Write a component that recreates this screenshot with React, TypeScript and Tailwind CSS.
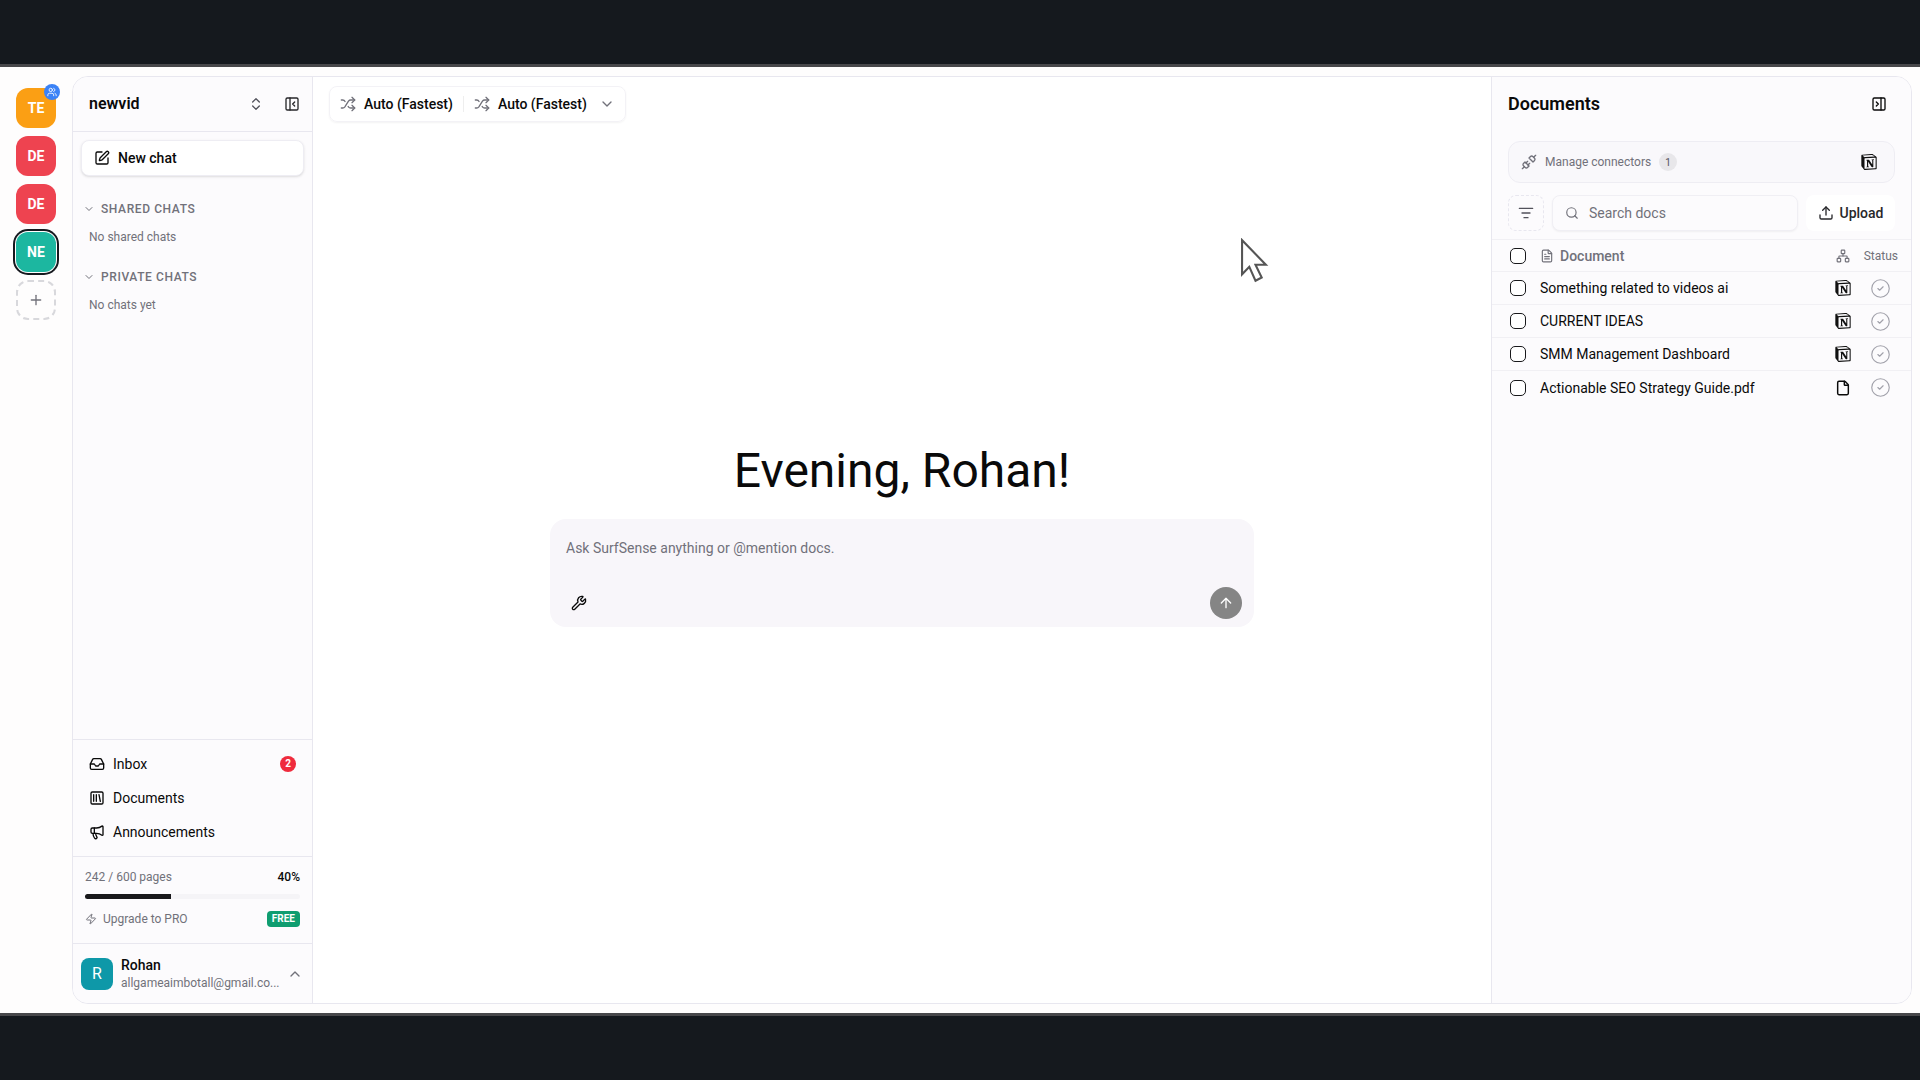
import React from "react";
import {
  ArrowUp,
  ChevronDown,
  ChevronUp,
  ChevronsUpDown,
  CircleCheck,
  File,
  FileText,
  Inbox,
  ListFilter,
  Megaphone,
  Network,
  PanelLeftClose,
  PanelRightClose,
  Plus,
  Search,
  Shuffle,
  SquareLibrary,
  SquarePen,
  Unplug,
  Upload,
  Users,
  Wrench,
  Zap,
} from "lucide-react";
import { SiNotion } from "react-icons/si";

function Workspace({ label, color, active }: { label: string; color: string; active?: boolean }) {
  return (
    <div className={`relative flex h-10 w-10 items-center justify-center rounded-xl text-sm font-bold text-white ${color} ${active ? "ring-2 ring-[#15181e] ring-offset-1" : ""}`}>
      {label}
      {label === "TE" && (
        <span className="absolute -right-1 -top-1 flex h-4 w-4 items-center justify-center rounded-full bg-[#3b82f6]">
          <Users className="h-2.5 w-2.5 text-white" />
        </span>
      )}
    </div>
  );
}

function ChatSection({ title, empty }: { title: string; empty: string }) {
  return (
    <div className="flex flex-col">
      <div className="flex h-5 items-center gap-[6px] pl-[10px]">
        <ChevronDown className="h-3 w-3 text-[#71717a]" />
        <span className="text-xs font-medium tracking-[0.6px] text-[#71717a]">{title}</span>
      </div>
      <p className="mt-[10px] pl-[16px] text-xs leading-4 text-[#71717a]">{empty}</p>
    </div>
  );
}

const docs = [
  { name: "Something related to videos ai", notion: true },
  { name: "CURRENT IDEAS", notion: true },
  { name: "SMM Management Dashboard", notion: true },
  { name: "Actionable SEO Strategy Guide.pdf", notion: false },
];

export default function App() {
  return (
    <div className="flex h-screen w-full flex-col overflow-hidden bg-[#fefdfd] font-['Roboto',sans-serif] text-[#0a0a0a]">
      <div className="h-[64px] shrink-0 bg-[#15191e]" />
      <div className="h-[3px] shrink-0 bg-[#47474a]" />

      <div className="flex min-h-0 flex-1">
        {/* workspace rail */}
        <div className="flex w-[72px] shrink-0 flex-col items-start gap-2 pl-4 pt-[21px]">
          <Workspace label="TE" color="bg-[#fb9f14]" />
          <Workspace label="DE" color="bg-[#ee4350]" />
          <Workspace label="DE" color="bg-[#ee4350]" />
          <Workspace label="NE" color="bg-[#1cb7a0]" active />
          <div className="flex h-10 w-10 items-center justify-center rounded-xl border-2 border-dashed border-[#d8d8dc]">
            <Plus className="h-4 w-4 text-[#71717a]" />
          </div>
        </div>

        <div className="mb-[9px] mr-2 mt-[9px] flex min-w-0 flex-1 overflow-hidden rounded-2xl border border-[#e8e7ef] bg-white">
          {/* sidebar */}
          <aside className="flex w-[240px] shrink-0 flex-col border-r border-[#e8e7ef] bg-[#fcfbfd]">
            <div className="flex h-[55px] shrink-0 items-center justify-between border-b border-[#e8e7ef] pl-4 pr-[12px]">
              <span className="text-base font-semibold">newvid</span>
              <div className="flex items-center gap-[20px]">
                <ChevronsUpDown className="h-4 w-4 text-[#52525b]" />
                <PanelLeftClose className="h-4 w-4 text-[#27272a]" />
              </div>
            </div>

            <div className="px-2 pt-2">
              <button className="flex h-9 w-full items-center gap-[8px] rounded-lg border border-[#eeedf3] bg-white pl-3 text-sm font-medium shadow-sm">
                <SquarePen className="h-4 w-4" />
                New chat
              </button>
            </div>

            <div className="mt-[23px] flex flex-col gap-[22px]">
              <ChatSection title="SHARED CHATS" empty="No shared chats" />
              <ChatSection title="PRIVATE CHATS" empty="No chats yet" />
            </div>

            <div className="mt-auto flex flex-col border-t border-[#e8e7ef] py-[7px]">
              <div className="flex h-[34px] items-center gap-[8px] pl-4 pr-4 text-sm">
                <Inbox className="h-4 w-4" />
                <span>Inbox</span>
                <span className="ml-auto flex h-4 w-4 items-center justify-center rounded-full bg-[#ef2b3d] text-[10px] font-bold text-white">2</span>
              </div>
              <div className="flex h-[34px] items-center gap-[8px] pl-4 text-sm">
                <SquareLibrary className="h-4 w-4" />
                <span>Documents</span>
              </div>
              <div className="flex h-[34px] items-center gap-[8px] pl-4 text-sm">
                <Megaphone className="h-4 w-4" />
                <span>Announcements</span>
              </div>
            </div>

            <div className="flex flex-col border-t border-[#e8e7ef] px-3 pb-[16px] pt-[12px]">
              <div className="flex items-center justify-between text-xs leading-4">
                <span className="text-[#71717a]">242 / 600 pages</span>
                <span className="font-medium">40%</span>
              </div>
              <div className="mt-[9px] h-[5px] w-full rounded-full bg-[#f5f4f7]">
                <div className="h-full rounded-l-full bg-[#18181b]" style={{ width: "40%" }} />
              </div>
              <div className="mt-[12px] flex items-center gap-[6px] text-xs text-[#71717a]">
                <Zap className="h-3 w-3" />
                <span>Upgrade to PRO</span>
                <span className="ml-auto flex h-4 items-center rounded bg-[#0f9d70] px-[5px] text-[10px] font-bold text-white">FREE</span>
              </div>
            </div>

            <div className="flex h-[60px] shrink-0 items-center border-t border-[#e8e7ef] pl-2 pr-[9px]">
              <div className="flex h-8 w-8 shrink-0 items-center justify-center rounded-lg bg-[#0e98a8] text-base text-white">R</div>
              <div className="ml-2 flex min-w-0 flex-1 flex-col">
                <span className="text-sm font-medium leading-[18px]">Rohan</span>
                <span className="mt-[1px] truncate text-xs leading-4 text-[#71717a]">allgameaimbotall@gmail.co...</span>
              </div>
              <ChevronUp className="ml-1 h-4 w-4 text-[#71717a]" />
            </div>
          </aside>

          {/* main */}
          <main className="flex min-w-0 flex-1 flex-col bg-white">
            <div className="flex h-[54px] shrink-0 items-center pl-4">
              <div className="flex h-[36px] items-center rounded-lg border border-[#f3f2f6] pl-[10px] pr-[10px] text-sm font-medium shadow-xs">
                <Shuffle className="h-4 w-4 text-[#71717a]" />
                <span className="ml-[8px]">Auto (Fastest)</span>
                <span className="mx-[10px] h-4 w-px bg-[#eeeeee]" />
                <Shuffle className="h-4 w-4 text-[#71717a]" />
                <span className="ml-[8px]">Auto (Fastest)</span>
                <ChevronDown className="ml-[12px] h-4 w-4 text-[#71717a]" />
              </div>
            </div>

            <div className="relative flex flex-1 flex-col items-center pt-[316px]">
              <h1 className="text-[48px] font-normal leading-[48px]">Evening, Rohan!</h1>
              <div className="mt-[24px] flex h-[108px] w-[704px] flex-col rounded-2xl bg-[#f8f6fa] px-4 pb-[8px] pt-[19px]">
                <p className="text-sm leading-5 text-[#71717a]">Ask SurfSense anything or @mention docs.</p>
                <div className="mt-auto flex items-center justify-between">
                  <Wrench className="ml-[5px] h-4 w-4" />
                  <span className="mr-[-4px] flex h-8 w-8 items-center justify-center rounded-full bg-[#858585]">
                    <ArrowUp className="h-4 w-4 text-white" />
                  </span>
                </div>
              </div>
            </div>
          </main>

          {/* documents panel */}
          <aside className="flex w-[420px] shrink-0 flex-col border-l border-[#e8e7ef] bg-[#fcfbfd]">
            <div className="flex h-[54px] items-center justify-between pl-4 pr-[24px]">
              <h2 className="text-lg font-semibold">Documents</h2>
              <PanelRightClose className="h-4 w-4" />
            </div>
            <div className="mx-4 mt-[10px] flex h-[42px] items-center rounded-xl border border-[#eeedf3] bg-[#f9f8fb] pl-[12px] pr-[17px]">
              <Unplug className="h-4 w-4 text-[#71717a]" />
              <span className="ml-[8px] text-xs text-[#71717a]">Manage connectors</span>
              <span className="ml-[8px] flex h-[18px] w-[18px] items-center justify-center rounded-full bg-[#e8e7ea] text-[10px] text-[#52525b]">1</span>
              <SiNotion className="ml-auto h-4 w-4 text-[#111]" />
            </div>
            <div className="mx-4 mt-[12px] flex h-9 items-center gap-2">
              <span className="flex h-9 w-9 shrink-0 items-center justify-center rounded-lg border border-dashed border-[#e8e7ef]">
                <ListFilter className="h-4 w-4 text-[#52525b]" />
              </span>
              <div className="flex h-9 w-[246px] items-center rounded-lg border border-[#f0eff4] bg-[#fcfbfd] pl-3 shadow-xs">
                <Search className="h-3.5 w-3.5 text-[#71717a]" />
                <span className="ml-[10px] text-sm text-[#71717a]">Search docs</span>
              </div>
              <span className="flex h-9 flex-1 items-center justify-center gap-[6px] rounded-lg bg-white text-sm font-medium text-[#27272a]">
                <Upload className="h-4 w-4" />
                Upload
              </span>
            </div>

            <div className="mt-[8px] flex h-[33px] items-center border-y border-[#f1f0f4] pl-[18px] pr-[13px]">
              <span className="h-4 w-4 rounded-[5px] border border-[#18181b] bg-white" />
              <FileText className="ml-[14px] h-3.5 w-3.5 text-[#71717a]" />
              <span className="ml-[6px] text-sm font-medium text-[#71717a]">Document</span>
              <Network className="ml-auto h-3.5 w-3.5 text-[#71717a]" />
              <span className="ml-[14px] text-xs text-[#71717a]">Status</span>
            </div>
            {docs.map((d) => (
              <div key={d.name} className="flex h-[33px] items-center border-b border-[#f1f0f4] pl-[18px] pr-[20px] last:border-b-0">
                <span className="h-4 w-4 rounded-[5px] border border-[#18181b] bg-white" />
                <span className="ml-[14px] text-sm">{d.name}</span>
                {d.notion ? <SiNotion className="ml-auto h-4 w-4 text-[#111]" /> : <File className="ml-auto h-4 w-4" strokeWidth={2.2} />}
                <CircleCheck className="ml-[19px] h-[21px] w-[21px] text-[#a1a1aa]" strokeWidth={1.3} />
              </div>
            ))}
          </aside>
        </div>
      </div>

      <div className="h-[3px] shrink-0 bg-[#47474a]" />
      <div className="h-[64px] shrink-0 bg-[#15191e]" />

      {/* screen-recording cursor */}
      <svg viewBox="0 0 30 44" preserveAspectRatio="none" className="pointer-events-none absolute left-[1240px] top-[238px] h-[47px] w-[31px]" fill="#fff" stroke="#555" strokeWidth="2">
        <path d="M2 2v32l7-7 6 13 6-3-6-12h10Z" />
      </svg>
    </div>
  );
}
